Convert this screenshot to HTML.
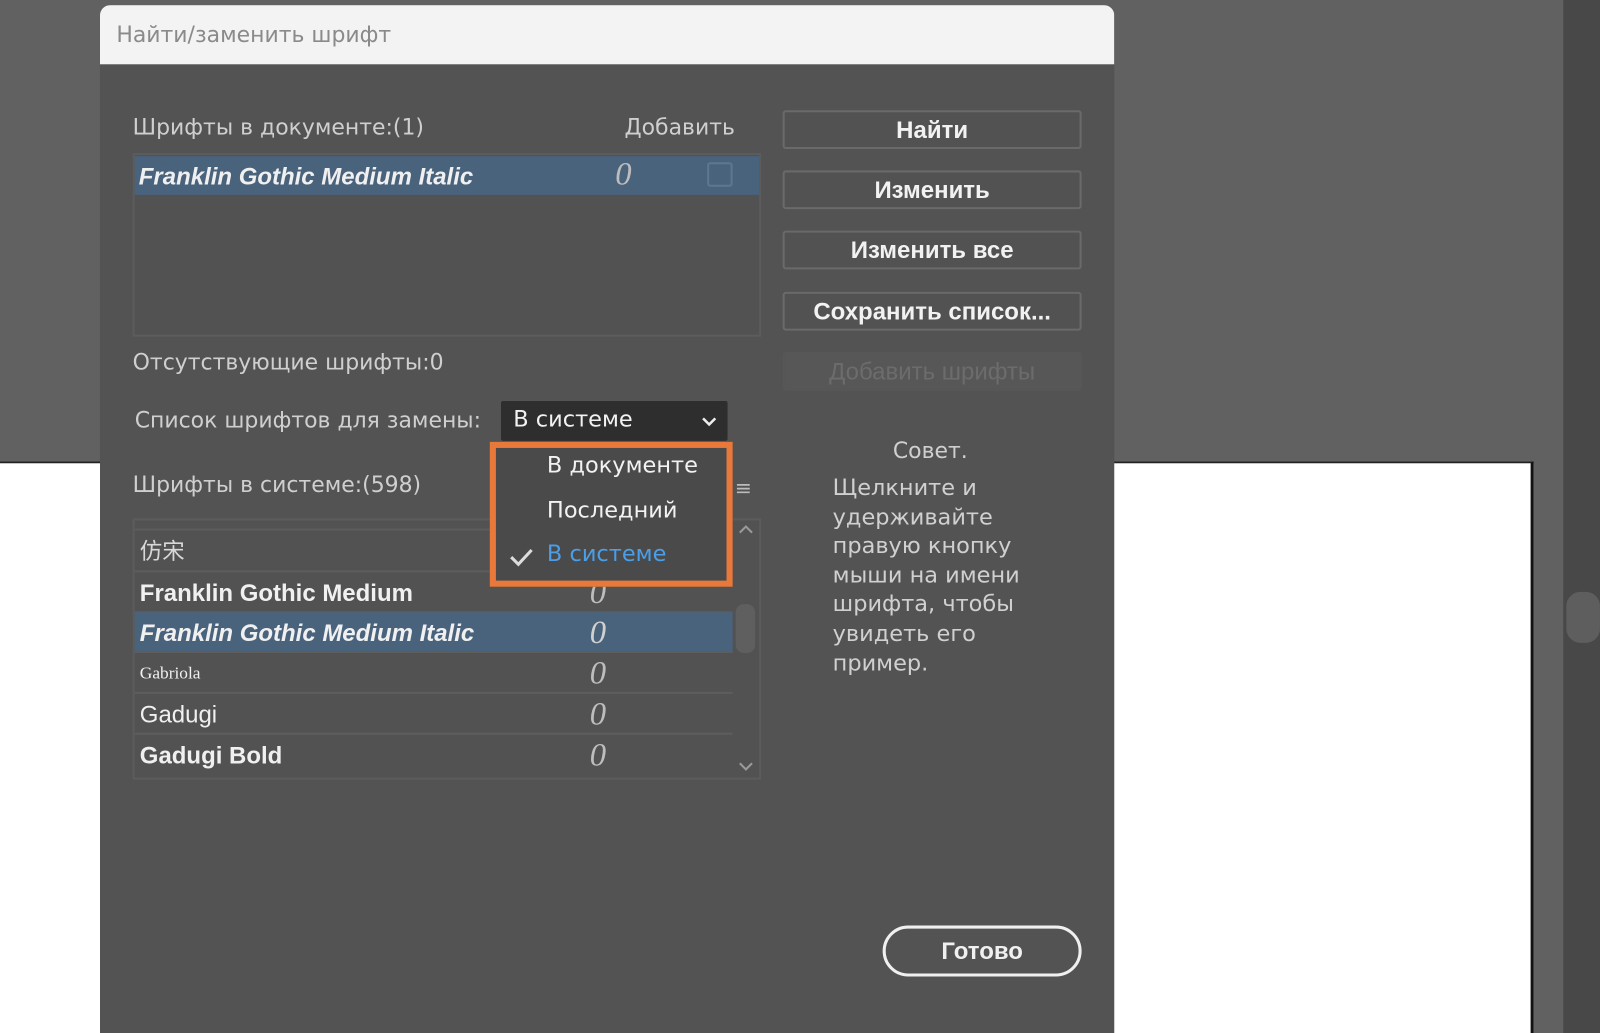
<!DOCTYPE html>
<html><head><meta charset="utf-8"><style>
*{margin:0;padding:0;box-sizing:border-box}
html,body{width:1600px;height:1033px;overflow:hidden;background:#616161;position:relative}
#w{position:absolute;left:0;top:0;width:1568px;height:1013px;overflow:hidden;transform:scale(1.0204);transform-origin:0 0;font-family:"DejaVu Sans","Noto Sans CJK SC",sans-serif;color:#d4d4d4}
.a{position:absolute}
.t{font-size:21.5px;color:#cfcfcf;white-space:nowrap}
.btn{position:absolute;left:767px;width:293px;height:38px;border:2px solid #6a6a6a;border-radius:3px;color:#f2f2f2;font-family:"Liberation Sans",sans-serif;font-size:23.5px;font-weight:bold;text-align:center;line-height:34px;background:#525252;white-space:nowrap}
.row{position:absolute;left:132px;width:586px;height:40px;border-bottom:2px solid #5d5d5d;font-family:"Liberation Sans","Noto Sans CJK SC",sans-serif;font-size:23.5px;color:#f0f0f0;padding-left:5px;line-height:40px;white-space:nowrap}
.o{position:absolute;left:446px;top:0;font-family:"Liberation Serif",serif;font-style:italic;font-weight:normal;font-size:32px;color:#bdbdbd;line-height:38px}
</style></head><body><div id="w">
<div class="a" style="left:0;top:452px;width:1503px;height:561px;background:#fff;border-right:3px solid #111;border-top:2px solid #222"></div>
<div class="a" style="left:1532px;top:0;width:36px;height:1013px;background:#484848"></div>
<div class="a" style="left:1535px;top:580px;width:33px;height:50px;background:#5e5e5e;border-radius:14px"></div>

<div class="a" style="left:98px;top:5px;width:994px;height:1008px;background:#535353;border-radius:10px 10px 0 0;overflow:hidden">
 <div class="a" style="left:0;top:0;width:994px;height:58px;background:#f3f3f3"></div>
 <div class="a t" style="left:16px;top:17px;color:#8a8a8a;font-size:21.5px">Найти/заменить шрифт</div>
</div>

<div class="a t" style="left:130px;top:113px">Шрифты в документе:(1)</div>
<div class="a t" style="left:612px;top:113px">Добавить</div>
<div class="a" style="left:130px;top:150px;width:616px;height:180px;border:2px solid #5c5c5c;background:#525252"></div>
<div class="a" style="left:132px;top:153px;width:612px;height:38px;background:#4a637d"></div>
<div class="a" style="left:136px;top:160px;font-family:'Liberation Sans',sans-serif;font-size:23.5px;font-weight:bold;font-style:italic;color:#f0f0f0;white-space:nowrap">Franklin Gothic Medium Italic</div>
<div class="a" style="left:603px;top:152px;font-family:'Liberation Serif',serif;font-style:italic;font-size:32px;color:#bdbdbd">0</div>
<div class="a" style="left:693px;top:159px;width:25px;height:24px;border:2px solid #5e7690;border-radius:3px"></div>

<div class="a t" style="left:130px;top:343px">Отсутствующие шрифты:0</div>
<div class="a t" style="left:132px;top:400px">Список шрифтов для замены:</div>
<div class="a" style="left:491px;top:393px;width:222px;height:39px;background:#2e2e2e;border-radius:2px"></div>
<div class="a" style="left:503px;top:399px;font-size:22px;color:#f2f2f2">В системе</div>
<svg class="a" style="left:686px;top:406px" width="18" height="14"><path d="M3 4 L9 10 L15 4" stroke="#eee" stroke-width="2.5" fill="none"/></svg>

<div class="a t" style="left:130px;top:463px">Шрифты в системе:(598)</div>
<div class="a" style="left:720px;top:466px;color:#bbb;font-size:20px">≡</div>
<div class="a" style="left:130px;top:508px;width:616px;height:256px;border:2px solid #5c5c5c;background:#525252;overflow:hidden"></div>
<div class="row" style="top:518px;height:2px;padding:0"></div>
<div class="row" style="top:521px;font-size:22px;color:#d8d8d8">仿宋</div>
<div class="row" style="top:561px;font-weight:bold">Franklin Gothic Medium<span class="o">0</span></div>
<div class="row" style="top:600px;background:#4a637d;font-weight:bold;font-style:italic">Franklin Gothic Medium Italic<span class="o" style="color:#d0d0d0;font-style:italic">0</span></div>
<div class="row" style="top:640px;font-family:'Liberation Serif',serif;font-size:17px">Gabriola<span class="o">0</span></div>
<div class="row" style="top:680px">Gadugi<span class="o">0</span></div>
<div class="row" style="top:720px;font-weight:bold;border-bottom:none">Gadugi Bold<span class="o">0</span></div>
<div class="a" style="left:721px;top:592px;width:19px;height:48px;background:#5f5f5f;border-radius:8px"></div>
<svg class="a" style="left:722px;top:512px" width="18" height="14"><path d="M3 10 L9 4 L15 10" stroke="#9a9a9a" stroke-width="2" fill="none"/></svg>
<svg class="a" style="left:722px;top:744px" width="18" height="14"><path d="M3 4 L9 10 L15 4" stroke="#9a9a9a" stroke-width="2" fill="none"/></svg>

<div class="a" style="left:480px;top:433px;width:238px;height:142px;border:6px solid #e8793a;background:#4a4a4a"></div>
<div class="a" style="left:536px;top:444px;font-size:22px;color:#f2f2f2;white-space:nowrap">В документе</div>
<div class="a" style="left:536px;top:488px;font-size:22px;color:#f2f2f2">Последний</div>
<div class="a" style="left:536px;top:531px;font-size:22px;color:#4b9ee8">В системе</div>
<svg class="a" style="left:498px;top:535px" width="26" height="22"><path d="M3 11 L10 18 L23 4" stroke="#ddd" stroke-width="3" fill="none"/></svg>

<div class="btn" style="top:108px">Найти</div>
<div class="btn" style="top:167px">Изменить</div>
<div class="btn" style="top:226px">Изменить все</div>
<div class="btn" style="top:286px">Сохранить список...</div>
<div class="btn" style="top:345px;border-color:#575757;color:#6c6c6c;font-weight:normal;background:#575757">Добавить шрифты</div>

<div class="a t" style="left:875px;top:430px;font-size:21.5px">Совет.</div>
<div class="a" style="left:816px;top:465px;font-size:22px;line-height:28.6px;color:#d0d0d0;white-space:nowrap">Щелкните и<br>удерживайте<br>правую кнопку<br>мыши на имени<br>шрифта, чтобы<br>увидеть его<br>пример.</div>

<div class="a" style="left:865px;top:907px;width:195px;height:50px;border:3px solid #f0f0f0;border-radius:25px;text-align:center;line-height:44px;font-family:'Liberation Sans',sans-serif;font-size:23.5px;font-weight:bold;color:#f0f0f0">Готово</div>
</div></body></html>
